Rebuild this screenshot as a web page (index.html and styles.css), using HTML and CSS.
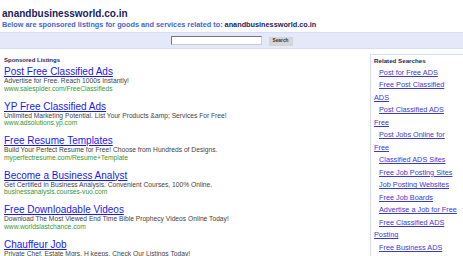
FILE: index.html
```html
<!DOCTYPE html>
<html>
<head>
<meta charset="utf-8">
<link rel="stylesheet" href="styles.css">
</head>
<body>
<div class="header">
  <div class="site">anandbusinessworld.co.in</div>
  <div class="sub">Below are sponsored listings for goods and services related to: <span class="dom">anandbusinessworld.co.in</span></div>
</div>
<div class="band">
  <input class="q" type="text">
  <button class="btn">Search</button>
</div>
<div class="main">
  <div class="listings">
    <div class="head">Sponsored Listings</div>
    <div class="ad"><a class="t" href="#">Post Free Classified Ads</a><div class="d">Advertise for Free. Reach 1000s Instantly!</div><div class="u">www.salespider.com/FreeClassifieds</div></div>
    <div class="ad"><a class="t" href="#">YP Free Classified Ads</a><div class="d">Unlimited Marketing Potential. List Your Products &amp;amp; Services For Free!</div><div class="u">www.adsolutions.yp.com</div></div>
    <div class="ad"><a class="t" href="#">Free Resume Templates</a><div class="d">Build Your Perfect Resume for Free! Choose from Hundreds of Designs.</div><div class="u">myperfectresume.com/Resume+Template</div></div>
    <div class="ad"><a class="t" href="#">Become a Business Analyst</a><div class="d">Get Certified in Business Analysis. Convenient Courses, 100% Online.</div><div class="u">businessanalysis.courses-vuo.com</div></div>
    <div class="ad"><a class="t" href="#">Free Downloadable Videos</a><div class="d">Download The Most Viewed End Time Bible Prophecy Videos Online Today!</div><div class="u">www.worldslastchance.com</div></div>
    <div class="ad"><a class="t" href="#">Chauffeur Job</a><div class="d">Private Chef. Estate Mgrs. H keeps. Check Our Listings Today!</div></div>
  </div>
  <div class="side">
    <div class="shead">Related Searches</div>
    <div class="rl"><a href="#">Post for Free ADS</a></div>
    <div class="rl"><a href="#">Free Post Classified ADS</a></div>
    <div class="rl"><a href="#">Post Classified ADS Free</a></div>
    <div class="rl"><a href="#">Post Jobs Online for Free</a></div>
    <div class="rl"><a href="#">Classified ADS Sites</a></div>
    <div class="rl"><a href="#">Free Job Posting Sites</a></div>
    <div class="rl"><a href="#">Job Posting Websites</a></div>
    <div class="rl"><a href="#">Free Job Boards</a></div>
    <div class="rl"><a href="#">Advertise a Job for Free</a></div>
    <div class="rl"><a href="#">Free Classified ADS Posting</a></div>
    <div class="rl"><a href="#">Free Business ADS</a></div>
  </div>
</div>
</body>
</html>
```
FILE: styles.css
```css
html, body {
  margin: 0;
  padding: 0;
  overflow: hidden;
  background: #fff;
  font-family: "Liberation Sans", Arial, sans-serif;
}
.header {
  padding: 8px 2px 0 2px;
}
.site {
  font-size: 10px;
  line-height: 12px;
  font-weight: bold;
  color: #1c1c5e;
}
.sub {
  font-size: 7.3px;
  line-height: 9px;
  font-weight: bold;
  color: #4466cc;
  white-space: nowrap;
}
.sub .dom {
  color: #1c1c5e;
}
.band {
  margin-top: 3px;
  height: 16.5px;
  box-sizing: border-box;
  background: #e3e9f8;
  border-top: 1px solid #d6dff2;
  border-bottom: 1px solid #d6dff2;
  display: flex;
  justify-content: center;
  align-items: flex-start;
  gap: 7px;
  padding-top: 3px;
}
.q {
  width: 91px;
  height: 8.5px;
  box-sizing: border-box;
  margin: 0;
  padding: 0;
  background: #fff;
  border: 1px solid;
  border-color: #777 #ccc #ccc #777;
}
.btn {
  width: 24px;
  height: 8.5px;
  box-sizing: border-box;
  margin: 1.3px 0 0 0;
  padding: 0;
  border: none;
  background: #d6d6d6;
  font-family: "Liberation Sans", Arial, sans-serif;
  font-size: 4.8px;
  font-weight: bold;
  color: #333;
  line-height: 8.5px;
}
.main {
  display: grid;
  grid-template-columns: 1fr 93px;
}
.listings {
  padding: 8px 0 0 4px;
}
.head {
  font-size: 6px;
  line-height: 7px;
  font-weight: bold;
  color: #2a2a5a;
  margin-bottom: 2.8px;
}
.ad {
  margin-bottom: 8.5px;
  white-space: nowrap;
}
.ad .t {
  display: block;
  font-size: 10px;
  line-height: 11px;
  color: #1a1aee;
  text-decoration: underline;
}
.ad .d {
  font-size: 6.7px;
  line-height: 7.5px;
  color: #444;
}
.ad .u {
  font-size: 6.7px;
  line-height: 7.5px;
  color: #339933;
}
.side {
  margin-top: 5.5px;
  border-top: 1px solid #d5ddef;
  border-left: 1px solid #d5ddef;
  padding: 1.6px 4px 0 3px;
  min-height: 300px;
}
.shead {
  font-size: 6.2px;
  line-height: 7px;
  font-weight: bold;
  color: #2a2a4a;
  margin-bottom: 3px;
}
.rl {
  font-size: 7.3px;
  line-height: 12.5px;
  text-indent: 5px;
}
.rl a {
  color: #3b3bd0;
  text-decoration: underline;
}
```
